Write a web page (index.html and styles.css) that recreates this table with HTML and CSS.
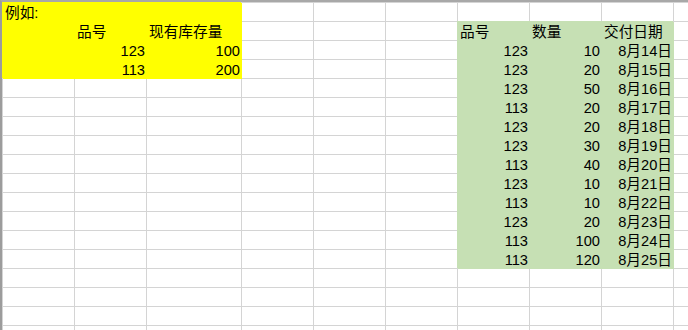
FILE: index.html
```html
<!DOCTYPE html>
<html lang="zh-CN">
<head>
<meta charset="utf-8">
<title>Sheet</title>
<link rel="stylesheet" href="styles.css">
</head>
<body>
<div class="sheet">
  <div class="grid">
    <div class="row">
      <div class="c y">例如:</div><div class="c y"></div><div class="c w y"></div><div class="c"></div><div class="c"></div><div class="c"></div><div class="c"></div><div class="c"></div><div class="c"></div><div class="c"></div>
    </div>
    <div class="row">
      <div class="c y"></div><div class="c y">品号</div><div class="c w y">现有库存量</div><div class="c"></div><div class="c"></div><div class="c"></div><div class="c g">品号</div><div class="c g">数量</div><div class="c g">交付日期</div><div class="c"></div>
    </div>
    <div class="row">
      <div class="c y"></div><div class="c y r">123</div><div class="c w y r">100</div><div class="c"></div><div class="c"></div><div class="c"></div><div class="c g r">123</div><div class="c g r">10</div><div class="c g r">8月14日</div><div class="c"></div>
    </div>
    <div class="row">
      <div class="c y"></div><div class="c y r">113</div><div class="c w y r">200</div><div class="c"></div><div class="c"></div><div class="c"></div><div class="c g r">123</div><div class="c g r">20</div><div class="c g r">8月15日</div><div class="c"></div>
    </div>
    <div class="row">
      <div class="c"></div><div class="c"></div><div class="c w"></div><div class="c"></div><div class="c"></div><div class="c"></div><div class="c g r">123</div><div class="c g r">50</div><div class="c g r">8月16日</div><div class="c"></div>
    </div>
    <div class="row">
      <div class="c"></div><div class="c"></div><div class="c w"></div><div class="c"></div><div class="c"></div><div class="c"></div><div class="c g r">113</div><div class="c g r">20</div><div class="c g r">8月17日</div><div class="c"></div>
    </div>
    <div class="row">
      <div class="c"></div><div class="c"></div><div class="c w"></div><div class="c"></div><div class="c"></div><div class="c"></div><div class="c g r">123</div><div class="c g r">20</div><div class="c g r">8月18日</div><div class="c"></div>
    </div>
    <div class="row">
      <div class="c"></div><div class="c"></div><div class="c w"></div><div class="c"></div><div class="c"></div><div class="c"></div><div class="c g r">123</div><div class="c g r">30</div><div class="c g r">8月19日</div><div class="c"></div>
    </div>
    <div class="row">
      <div class="c"></div><div class="c"></div><div class="c w"></div><div class="c"></div><div class="c"></div><div class="c"></div><div class="c g r">113</div><div class="c g r">40</div><div class="c g r">8月20日</div><div class="c"></div>
    </div>
    <div class="row">
      <div class="c"></div><div class="c"></div><div class="c w"></div><div class="c"></div><div class="c"></div><div class="c"></div><div class="c g r">123</div><div class="c g r">10</div><div class="c g r">8月21日</div><div class="c"></div>
    </div>
    <div class="row">
      <div class="c"></div><div class="c"></div><div class="c w"></div><div class="c"></div><div class="c"></div><div class="c"></div><div class="c g r">113</div><div class="c g r">10</div><div class="c g r">8月22日</div><div class="c"></div>
    </div>
    <div class="row">
      <div class="c"></div><div class="c"></div><div class="c w"></div><div class="c"></div><div class="c"></div><div class="c"></div><div class="c g r">123</div><div class="c g r">20</div><div class="c g r">8月23日</div><div class="c"></div>
    </div>
    <div class="row">
      <div class="c"></div><div class="c"></div><div class="c w"></div><div class="c"></div><div class="c"></div><div class="c"></div><div class="c g r">113</div><div class="c g r">100</div><div class="c g r">8月24日</div><div class="c"></div>
    </div>
    <div class="row">
      <div class="c"></div><div class="c"></div><div class="c w"></div><div class="c"></div><div class="c"></div><div class="c"></div><div class="c g r">113</div><div class="c g r">120</div><div class="c g r">8月25日</div><div class="c"></div>
    </div>
    <div class="row">
      <div class="c"></div><div class="c"></div><div class="c w"></div><div class="c"></div><div class="c"></div><div class="c"></div><div class="c"></div><div class="c"></div><div class="c"></div><div class="c"></div>
    </div>
    <div class="row">
      <div class="c"></div><div class="c"></div><div class="c w"></div><div class="c"></div><div class="c"></div><div class="c"></div><div class="c"></div><div class="c"></div><div class="c"></div><div class="c"></div>
    </div>
    <div class="row">
      <div class="c"></div><div class="c"></div><div class="c w"></div><div class="c"></div><div class="c"></div><div class="c"></div><div class="c"></div><div class="c"></div><div class="c"></div><div class="c"></div>
    </div>
    <div class="row">
      <div class="c"></div><div class="c"></div><div class="c w"></div><div class="c"></div><div class="c"></div><div class="c"></div><div class="c"></div><div class="c"></div><div class="c"></div><div class="c"></div>
    </div>
  </div>
</div>
</body>
</html>
```
FILE: styles.css
```css
html, body {
  margin: 0;
  padding: 0;
  background: #ffffff;
}
body {
  width: 688px;
  height: 330px;
  overflow: hidden;
  font-family: "Liberation Sans", "Noto Sans CJK SC", sans-serif;
  font-size: 14.67px;
  color: #000000;
}
.sheet {
  box-sizing: border-box;
  width: 688px;
  height: 330px;
  overflow: hidden;
  border-top: 2px solid #a8a8a8;
  border-left: 2px solid #9c9c9c;
}
.grid {
  width: max-content;
  border-top: 1px solid #d4d4d4;
  border-left: 1px solid #d4d4d4;
}
.row {
  display: flex;
  height: 19px;
}
.c {
  flex: none;
  box-sizing: border-box;
  width: 72px;
  height: 19px;
  border-right: 1px solid #d4d4d4;
  border-bottom: 1px solid #d4d4d4;
  display: flex;
  align-items: flex-end;
  padding: 0 1px 0 2px;
  line-height: 16px;
  white-space: nowrap;
}
.w {
  width: 95px;
}
.r {
  justify-content: flex-end;
}
.y {
  background: #ffff00;
  border-color: #ffff00;
  box-shadow: -1px -1px 0 #ffff00;
}
.g {
  background: #c6e0b4;
  border-color: #c6e0b4;
  box-shadow: -1px -1px 0 #c6e0b4;
}
```
